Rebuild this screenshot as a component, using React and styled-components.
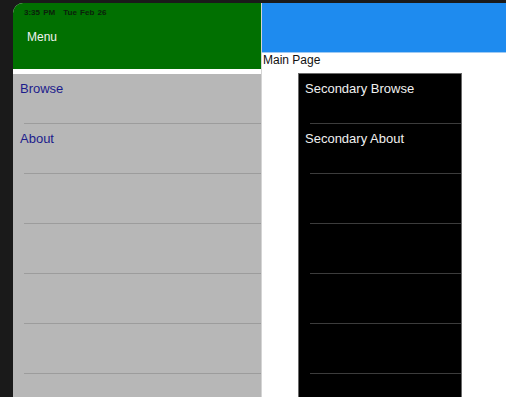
import React from 'react'
import styled, { createGlobalStyle } from 'styled-components'

const GlobalStyle = createGlobalStyle`
  html, body {
    margin: 0;
    padding: 0;
    background: #1a1a1a;
    font-family: "Liberation Sans", Arial, sans-serif;
  }
`

const Screen = styled.div`
  width: 506px;
  height: 397px;
  padding: 3px 0 0 13px;
  box-sizing: border-box;
  overflow: hidden;
`

const Device = styled.div`
  display: flex;
  height: 394px;
  border-top-left-radius: 10px;
  overflow: hidden;
  background: #fff;
`

const Sidebar = styled.div`
  width: 249px;
  flex-shrink: 0;
  display: flex;
  flex-direction: column;
  border-right: 1px solid #d4d4d4;
  box-sizing: border-box;
`

const MenuHeader = styled.header`
  flex-shrink: 0;
  height: 71px;
  background: #017001;
  padding: 5px 0 0 11px;
  box-sizing: border-box;
  border-bottom: 5px solid #fff;
`

const StatusBar = styled.div`
  font-size: 8px;
  font-weight: 700;
  color: #0b1f0b;
  line-height: 10px;
  word-spacing: 1px;
  span + span { margin-left: 8px; }
`

const MenuTitle = styled.div`
  color: #f2f2f2;
  font-size: 12px;
  line-height: 14px;
  margin: 12px 0 0 3px;
`

const List = styled.ul`
  flex: 1;
  min-height: 0;
  overflow: hidden;
  margin: 0;
  padding: 0;
  list-style: none;
  background: ${(p) => p.$bg};
  ${(p) => p.$border && `border: 1px solid ${p.$border}; border-bottom: none;`}
`

const Row = styled.li`
  position: relative;
  height: 50px;
  box-sizing: border-box;
  padding: 7px 0 0 ${(p) => p.$pad}px;
  font-size: 13px;
  line-height: 16px;
  color: ${(p) => p.$color};

  &::after {
    content: '';
    position: absolute;
    left: 11px;
    right: 0;
    bottom: 0;
    height: 1px;
    background: ${(p) => p.$line};
  }
`

const Main = styled.div`
  flex: 1;
  display: flex;
  flex-direction: column;
  min-width: 0;
`

const MainHeader = styled.header`
  flex-shrink: 0;
  height: 49px;
  background: #1e8bef;
  border-bottom: 1px solid #9fcaf3;
`

const MainTitle = styled.div`
  flex-shrink: 0;
  font-size: 12px;
  line-height: 14px;
  color: #111;
  padding-left: 1px;
`

const SecondaryWrap = styled.div`
  flex: 1;
  min-height: 0;
  display: flex;
  padding: 6px 0 0 36px;
`

const Secondary = styled.div`
  width: 164px;
  display: flex;
  flex-direction: column;
`

const primary = ['Browse', 'About', '', '', '', '', '']
const secondary = ['Secondary Browse', 'Secondary About', '', '', '', '', '']

export default function App() {
  return (
    <>
      <GlobalStyle />
      <Screen>
        <Device>
          <Sidebar>
            <MenuHeader>
              <StatusBar>
                <span>3:35 PM</span>
                <span>Tue Feb 26</span>
              </StatusBar>
              <MenuTitle>Menu</MenuTitle>
            </MenuHeader>
            <List $bg="#b7b7b7">
              {primary.map((label, i) => (
                <Row key={i} $pad={7} $color="#1c1c8c" $line="#9c9c9c">
                  {label}
                </Row>
              ))}
            </List>
          </Sidebar>
          <Main>
            <MainHeader />
            <MainTitle>Main Page</MainTitle>
            <SecondaryWrap>
              <Secondary>
                <List $bg="#000" $border="#6a6a6a">
                  {secondary.map((label, i) => (
                    <Row key={i} $pad={6} $color="#f0f0f0" $line="#3c3c3c">
                      {label}
                    </Row>
                  ))}
                </List>
              </Secondary>
            </SecondaryWrap>
          </Main>
        </Device>
      </Screen>
    </>
  )
}
